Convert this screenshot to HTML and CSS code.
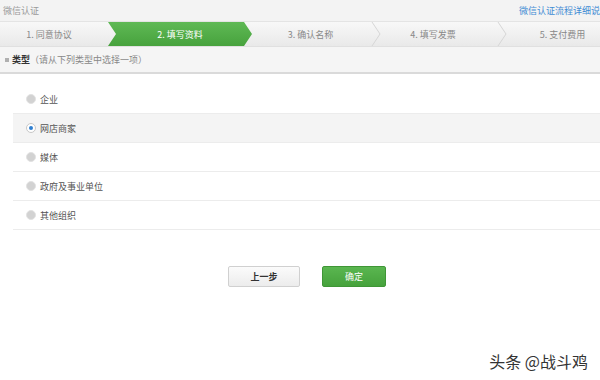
FILE: index.html
```html
<!DOCTYPE html>
<html lang="zh-CN">

<head>
    <meta charset="UTF-8">
    <meta name="viewport" content="width=device-width, initial-scale=1.0">
    <title>微信认证</title>
    <link rel="stylesheet" href="styles.css">
</head>

<body>
    <div class="page">
        <div class="topbar">
            <span class="topbar-title">微信认证</span>
            <a class="topbar-link" href="#">微信认证流程详细说</a>
        </div>

        <div class="steps">
            <div class="step step-1">1. 同意协议</div>
            <div class="step step-2 active">2. 填写资料</div>
            <div class="step step-3">3. 确认名称
                <svg class="chevron" width="10" height="24" viewBox="0 0 10 24"><polyline points="1,0 9,12 1,24" fill="none" stroke="#d6d6d6" stroke-width="1"/></svg>
            </div>
            <div class="step step-4">4. 填写发票
                <svg class="chevron" width="10" height="24" viewBox="0 0 10 24"><polyline points="1,0 9,12 1,24" fill="none" stroke="#d6d6d6" stroke-width="1"/></svg>
            </div>
            <div class="step step-5">5. 支付费用</div>
        </div>

        <div class="section-head">
            <span class="dot"></span>
            <strong>类型</strong>
            <span class="hint">（请从下列类型中选择一项）</span>
        </div>

        <ul class="options">
            <li class="option"><span class="radio"></span>企业</li>
            <li class="option selected"><span class="radio"></span>网店商家</li>
            <li class="option"><span class="radio"></span>媒体</li>
            <li class="option"><span class="radio"></span>政府及事业单位</li>
            <li class="option"><span class="radio"></span>其他组织</li>
        </ul>

        <div class="actions">
            <button class="btn btn-prev">上一步</button>
            <button class="btn btn-ok">确定</button>
        </div>

        <div class="watermark">头条 @战斗鸡</div>
    </div>
</body>

</html>
```

FILE: styles.css
```css
body {
    margin: 0;
    padding: 0;
    font-family: "Noto Sans CJK SC", "Liberation Sans", sans-serif;
    font-size: 9px;
    color: #555;
    background: #fff;
}

.page {
    position: relative;
    width: 600px;
    height: 380px;
    overflow: hidden;
}

.topbar {
    height: 22px;
    display: flex;
    align-items: center;
    justify-content: space-between;
    padding-left: 3px;
    background: #f3f3f3;
    border-bottom: 1px solid #e4e4e4;
    box-sizing: border-box;
}

.topbar-title {
    color: #999;
}

.topbar-link {
    color: #3f8bd4;
    text-decoration: none;
    white-space: nowrap;
    margin-right: 0;
}

.steps {
    height: 25px;
    display: flex;
    background: linear-gradient(#f8f8f8, #e9e9e9);
    border-bottom: 1px solid #e0e0e0;
    box-sizing: border-box;
}

.step {
    position: relative;
    display: flex;
    align-items: center;
    justify-content: center;
    color: #888;
    box-sizing: border-box;
}

.step-1 {
    width: 108px;
    padding-right: 10px;
}

.step-2 {
    width: 144px;
}

.step-3 {
    width: 125px;
    padding-right: 8px;
}

.step-4 {
    width: 126px;
    padding-right: 14px;
}

.step-5 {
    flex: 1;
    padding-left: 22px;
}

.step.active {
    color: #fff;
    background: linear-gradient(#5fb955, #47a23d);
    clip-path: polygon(0 0, calc(100% - 8px) 0, 100% 50%, calc(100% - 8px) 100%, 0 100%, 8px 50%);
}

.chevron {
    position: absolute;
    right: -4px;
    top: 0;
}

.section-head {
    height: 25px;
    display: flex;
    align-items: center;
    padding-left: 5px;
    background: #f5f5f5;
    border-bottom: 2px solid #dadada;
    color: #333;
}

.dot {
    width: 4px;
    height: 4px;
    background: #b0b0b0;
    margin-right: 3px;
}

.hint {
    color: #888;
}

.options {
    list-style: none;
    margin: 11px 0 0 13px;
    padding: 0;
}

.option {
    height: 28px;
    display: flex;
    align-items: center;
    padding-left: 13px;
    border-bottom: 1px solid #ececec;
    color: #555;
}

.option.selected {
    background: #f4f4f4;
}

.radio {
    width: 10px;
    height: 10px;
    border-radius: 50%;
    background: #d2d2d2;
    border: 1px solid #e2e2e2;
    margin-right: 4px;
    box-sizing: border-box;
    display: flex;
    align-items: center;
    justify-content: center;
}

.option.selected .radio {
    background: #fff;
    border-color: #c8c8c8;
}

.option.selected .radio::after {
    content: "";
    width: 4px;
    height: 4px;
    border-radius: 50%;
    background: #2f7fd0;
}

.actions {
    display: flex;
    margin-top: 36px;
    padding-left: 228px;
    gap: 22px;
}

.btn {
    height: 21px;
    font-family: "Noto Sans CJK SC", "Liberation Sans", sans-serif;
    font-size: 9px;
    border-radius: 2px;
    padding: 0;
}

.btn-prev {
    width: 72px;
    color: #333;
    font-weight: bold;
    background: linear-gradient(#fbfbfb, #ececec);
    border: 1px solid #d0d0d0;
}

.btn-ok {
    width: 64px;
    color: #fff;
    background: linear-gradient(#5ab650, #46a23c);
    border: 1px solid #3f9636;
}

.watermark {
    position: absolute;
    right: 12px;
    bottom: 7px;
    font-size: 16px;
    color: #333;
    text-shadow: 0 0 2px #fff, 0 0 2px #fff;
}
```
